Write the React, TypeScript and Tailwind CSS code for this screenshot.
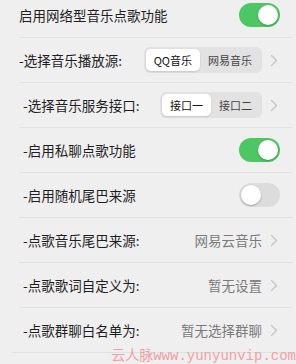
import { useState } from 'react';

type Row =
  | { kind: 'toggle'; label: string; on: boolean }
  | { kind: 'segment'; label: string; options: string[]; active: number }
  | { kind: 'value'; label: string; value: string };

const rows: Row[] = [
  { kind: 'toggle', label: '启用网络型音乐点歌功能', on: true },
  { kind: 'segment', label: '-选择音乐播放源:', options: ['QQ音乐', '网易音乐'], active: 0 },
  { kind: 'segment', label: '-选择音乐服务接口:', options: ['接口一', '接口二'], active: 0 },
  { kind: 'toggle', label: '-启用私聊点歌功能', on: true },
  { kind: 'toggle', label: '-启用随机尾巴来源', on: false },
  { kind: 'value', label: '-点歌音乐尾巴来源:', value: '网易云音乐' },
  { kind: 'value', label: '-点歌歌词自定义为:', value: '暂无设置' },
  { kind: 'value', label: '-点歌群聊白名单为:', value: '暂无选择群聊' },
];

function Chevron() {
  return (
    <svg width="8" height="13" viewBox="0 0 8 13" className="ml-[8px] shrink-0">
      <path d="M1.5 1.5 L6.5 6.5 L1.5 11.5" fill="none" stroke="#c4c4c6" strokeWidth="1.3" strokeLinecap="round" strokeLinejoin="round" />
    </svg>
  );
}

function Toggle({ initial }: { initial: boolean }) {
  const [on, setOn] = useState(initial);
  return (
    <button
      onClick={() => setOn((v) => !v)}
      className={`relative w-[41px] h-[24px] mr-[-2px] rounded-full transition-colors ${on ? 'bg-[#4cc764]' : 'bg-[#dcdcdc]'}`}
    >
      <span
        className={`absolute top-[2px] w-[20px] h-[20px] rounded-full bg-white shadow-[0_1px_2px_rgba(0,0,0,0.25)] transition-all ${on ? 'left-[19px]' : 'left-[2px]'}`}
      />
    </button>
  );
}

function Segment({ options, initial }: { options: string[]; initial: number }) {
  const [active, setActive] = useState(initial);
  return (
    <div className="flex items-center h-[26px] p-[2px] rounded-[6px] bg-[#e2e2e3]">
      {options.map((o, i) => (
        <button
          key={o}
          onClick={() => setActive(i)}
          className={`h-[22px] px-[8px] rounded-[5px] text-[11px] leading-none ${
            i === active ? 'bg-white text-[#111] shadow-[0_1px_2px_rgba(0,0,0,0.12)]' : 'text-[#444]'
          }`}
        >
          {o}
        </button>
      ))}
    </div>
  );
}

export default function App() {
  return (
    <div
      className="w-[296px] h-[364px] overflow-hidden bg-[#efeff0] relative"
      style={{ fontFamily: '"Noto Sans CJK SC", "Noto Sans", sans-serif' }}
    >
      <div className="mt-[-7px]">
        {rows.map((r, i) => (
          <div key={i}>
            <div className={`h-[44px] flex items-center pr-[18px] ${i < 2 ? 'pl-[19px]' : 'pl-[23px]'}`}>
              <span className="flex-1 text-[13.5px] text-[#1e1e1e]">{r.label}</span>
              {r.kind === 'toggle' && <Toggle initial={r.on} />}
              {r.kind === 'segment' && (
                <div className="flex items-center">
                  <Segment options={r.options} initial={r.active} />
                  <Chevron />
                </div>
              )}
              {r.kind === 'value' && (
                <div className="flex items-center">
                  <span className="text-[13.5px] text-[#7a7a7a]">{r.value}</span>
                  <Chevron />
                </div>
              )}
            </div>
            <div className={`h-px bg-[#e1e1e2] mr-[3px] ${i === rows.length - 1 ? 'ml-[12px]' : 'ml-[19px]'}`} />
          </div>
        ))}
      </div>
      <div
        className="absolute right-[0px] bottom-[0px] text-[14px] leading-[16px] text-[#f0a0a4]"
        style={{ fontFamily: '"Liberation Mono", "Noto Sans CJK SC", monospace' }}
      >
        云人脉www.yunyunvip.com
      </div>
    </div>
  );
}
